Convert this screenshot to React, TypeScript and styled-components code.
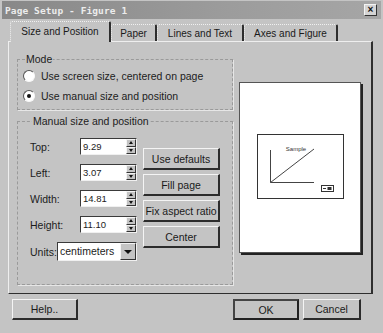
import React from "react";
import styled, { createGlobalStyle } from "styled-components";

const Global = createGlobalStyle`
  html, body { margin: 0; padding: 0; background: #c4c4c4; }
  body { font-family: "Liberation Sans", Arial, sans-serif; font-size: 10px; color: #1c1c1c; }
`;

const Window = styled.div`
  width: 383px;
  height: 333px;
  background: #c4c4c4;
  display: flex;
  flex-direction: column;
  box-sizing: border-box;
  overflow: hidden;
`;

const TitleBar = styled.div`
  height: 18px;
  margin: 1px 2px 0 2px;
  padding: 0 4px 0 3px;
  display: flex;
  align-items: center;
  justify-content: space-between;
  background: linear-gradient(90deg, #888 0%, #9c9c9c 60%, #a6a6a6 100%);
`;

const TitleText = styled.span`
  font-family: "DejaVu Sans Mono", "Liberation Mono", monospace;
  font-weight: bold;
  font-size: 9.5px;
  color: #ececec;
  letter-spacing: 0.1px;
`;

const CloseBox = styled.div`
  width: 11px;
  height: 10px;
  background: #d4d4d4;
  border: 1px solid;
  border-color: #f4f4f4 #333 #333 #f4f4f4;
  display: flex;
  align-items: center;
  justify-content: center;
  font-size: 10px;
  font-weight: bold;
  line-height: 1;
  color: #111;
`;

const Body = styled.div`
  flex: 1;
  display: flex;
  flex-direction: column;
  padding: 2px 10px 0 8px;
`;

const TabStrip = styled.div`
  height: 20px;
  display: flex;
  align-items: flex-end;
  padding-left: 2px;
  position: relative;
  z-index: 1;
`;

const Tab = styled.div<{ $active?: boolean; $w: number }>`
  width: ${(p) => p.$w}px;
  height: ${(p) => (p.$active ? 21 : 17)}px;
  margin-bottom: ${(p) => (p.$active ? -1 : 0)}px;
  box-sizing: border-box;
  background: #c4c4c4;
  border-top: 1px dotted #f0f0f0;
  border-left: 1px dotted #f0f0f0;
  border-right: 2px solid #2e2e2e;
  border-radius: 2px 2px 0 0;
  display: flex;
  align-items: center;
  justify-content: center;
  padding-bottom: ${(p) => (p.$active ? 2 : 0)}px;
  font-size: 10px;
  color: #1a1a1a;
`;

const Panel = styled.div`
  height: 253px;
  box-sizing: border-box;
  border: 1px solid;
  border-color: #eeeeee #2e2e2e #2e2e2e #eeeeee;
  border-right-width: 2px;
  display: flex;
  gap: 6px;
  padding: 11px 0 0 8px;
`;

const LeftCol = styled.div`
  width: 216px;
  display: flex;
  flex-direction: column;
  gap: 5px;
`;

const Group = styled.fieldset<{ $pad: string }>`
  margin: 0;
  padding: ${(p) => p.$pad};
  border: 1px dashed #9a9a9a;
  box-shadow: 1px 1px 0 #e6e6e6;
  min-width: 0;
`;

const Legend = styled.legend`
  padding: 0 1px;
  margin-left: 2px;
  font-size: 10.5px;
  line-height: 13px;
`;

const RadioRow = styled.label`
  height: 20px;
  display: flex;
  align-items: center;
  gap: 6px;
  font-size: 10.5px;
`;

const Radio = styled.span<{ $on?: boolean }>`
  width: 12px;
  height: 12px;
  box-sizing: border-box;
  border-radius: 50%;
  border: 1px solid;
  border-color: #555 #f8f8f8 #f8f8f8 #555;
  background: #fff;
  display: flex;
  align-items: center;
  justify-content: center;
  &::after {
    content: "";
    width: 4px;
    height: 4px;
    border-radius: 50%;
    background: ${(p) => (p.$on ? "#111" : "transparent")};
  }
`;

const ManualBody = styled.div`
  display: flex;
  gap: 6px;
`;

const FieldsCol = styled.div`
  display: flex;
  flex-direction: column;
  gap: 9px;
`;

const FieldRow = styled.div<{ $h?: number }>`
  height: ${(p) => p.$h ?? 17}px;
  display: flex;
  align-items: center;
`;

const FieldLabel = styled.span<{ $w: number }>`
  width: ${(p) => p.$w}px;
  font-size: 10.5px;
`;

const SpinBox = styled.div`
  width: 57px;
  height: 17px;
  box-sizing: border-box;
  border: 1px solid;
  border-color: #3a3a3a #f0f0f0 #f0f0f0 #3a3a3a;
  background: #fff;
  display: flex;
`;

const SpinValue = styled.span`
  flex: 1;
  padding-left: 2px;
  font-size: 9.5px;
  line-height: 15px;
`;

const SpinButtons = styled.div`
  width: 10px;
  display: flex;
  flex-direction: column;
  background: #c4c4c4;
`;

const SpinHalf = styled.div<{ $down?: boolean }>`
  flex: 1;
  box-sizing: border-box;
  border: 1px solid;
  border-color: #f4f4f4 #333 #333 #f4f4f4;
  display: flex;
  align-items: center;
  justify-content: center;
  &::after {
    content: "";
    border-left: 2.5px solid transparent;
    border-right: 2.5px solid transparent;
    ${(p) =>
      p.$down ? "border-top: 3px solid #111;" : "border-bottom: 3px solid #111;"}
  }
`;

const Select = styled.div`
  width: 80px;
  height: 19px;
  box-sizing: border-box;
  border: 1px solid;
  border-color: #3a3a3a #f0f0f0 #f0f0f0 #3a3a3a;
  background: #fff;
  display: flex;
`;

const SelectValue = styled.span`
  flex: 1;
  padding-left: 2px;
  font-size: 10.5px;
  line-height: 17px;
`;

const DropButton = styled.div`
  width: 16px;
  box-sizing: border-box;
  background: #c4c4c4;
  border: 1px solid;
  border-color: #f4f4f4 #333 #333 #f4f4f4;
  display: flex;
  align-items: center;
  justify-content: center;
  &::after {
    content: "";
    border-left: 4px solid transparent;
    border-right: 4px solid transparent;
    border-top: 4px solid #111;
  }
`;

const ButtonsCol = styled.div`
  margin-top: 10px;
  display: flex;
  flex-direction: column;
  gap: 4px;
`;

const Button = styled.button<{ $w: number; $h?: number; $default?: boolean }>`
  width: ${(p) => p.$w}px;
  height: ${(p) => p.$h ?? 22}px;
  margin: 0;
  padding: 0;
  box-sizing: border-box;
  background: #c4c4c4;
  border: ${(p) => (p.$default ? 2 : 1)}px solid;
  border-color: ${(p) =>
    p.$default ? "#444 #222 #222 #444" : "#f4f4f4 #2c2c2c #2c2c2c #f4f4f4"};
  border-right-width: 2px;
  border-bottom-width: 2px;
  font-family: "Liberation Sans", Arial, sans-serif;
  font-size: 10.5px;
  color: #1a1a1a;
`;

const Page = styled.div`
  margin-top: 29px;
  width: 122px;
  height: 171px;
  box-sizing: border-box;
  background: #fff;
  border: 1px solid #555;
  box-shadow: 2px 2px 0 #222;
  padding: 51px 0 0 17px;
`;

const Footer = styled.div`
  display: flex;
  align-items: flex-start;
  padding: 5px 12px 0 4px;
  gap: 4px;
`;

const Spacer = styled.div`
  flex: 1;
`;

const tabs = [
  { label: "Size and Position", w: 101, active: true },
  { label: "Paper", w: 46 },
  { label: "Lines and Text", w: 87 },
  { label: "Axes and Figure", w: 94 },
];

const fields = [
  { label: "Top:", value: "9.29" },
  { label: "Left:", value: "3.07" },
  { label: "Width:", value: "14.81" },
  { label: "Height:", value: "11.10" },
];

function SampleChart() {
  return (
    <svg width="88" height="66" viewBox="0 0 88 66">
      <rect x="0.5" y="0.5" width="86" height="64" fill="#fff" stroke="#333" />
      <line x1="13.5" y1="16" x2="13.5" y2="48.5" stroke="#444" />
      <line x1="13.5" y1="48.5" x2="57" y2="48.5" stroke="#444" />
      <line x1="13.5" y1="48.5" x2="57" y2="15" stroke="#444" />
      <text
        x="39"
        y="17"
        fontSize="6"
        textAnchor="middle"
        fontFamily="Liberation Sans, Arial, sans-serif"
        fill="#333"
      >
        Sample
      </text>
      <rect x="64.5" y="51.5" width="12" height="6" fill="#fff" stroke="#333" />
      <line x1="66" y1="54.5" x2="69" y2="54.5" stroke="#333" />
      <rect x="70.5" y="53" width="4" height="3" fill="#333" />
    </svg>
  );
}

export default function App() {
  return (
    <Window>
      <Global />
      <TitleBar>
        <TitleText>Page Setup - Figure 1</TitleText>
        <CloseBox>×</CloseBox>
      </TitleBar>
      <Body>
        <TabStrip>
          {tabs.map((t) => (
            <Tab key={t.label} $active={t.active} $w={t.w}>
              {t.label}
            </Tab>
          ))}
        </TabStrip>
        <Panel>
          <LeftCol>
            <Group $pad="0 0 3px 5px">
              <Legend>Mode</Legend>
              <RadioRow>
                <Radio />
                Use screen size, centered on page
              </RadioRow>
              <RadioRow>
                <Radio $on />
                Use manual size and position
              </RadioRow>
            </Group>
            <Group $pad="10px 0 23px 12px">
              <Legend>Manual size and position</Legend>
              <ManualBody>
                <FieldsCol>
                  {fields.map((f) => (
                    <FieldRow key={f.label}>
                      <FieldLabel $w={50}>{f.label}</FieldLabel>
                      <SpinBox>
                        <SpinValue>{f.value}</SpinValue>
                        <SpinButtons>
                          <SpinHalf />
                          <SpinHalf $down />
                        </SpinButtons>
                      </SpinBox>
                    </FieldRow>
                  ))}
                  <FieldRow $h={19}>
                    <FieldLabel $w={27}>Units:</FieldLabel>
                    <Select>
                      <SelectValue>centimeters</SelectValue>
                      <DropButton />
                    </Select>
                  </FieldRow>
                </FieldsCol>
                <ButtonsCol>
                  <Button $w={77}>Use defaults</Button>
                  <Button $w={77}>Fill page</Button>
                  <Button $w={77}>Fix aspect ratio</Button>
                  <Button $w={77}>Center</Button>
                </ButtonsCol>
              </ManualBody>
            </Group>
          </LeftCol>
          <Page>
            <SampleChart />
          </Page>
        </Panel>
        <Footer>
          <Button $w={66} $h={21}>
            Help..
          </Button>
          <Spacer />
          <Button $w={66} $h={21} $default>
            OK
          </Button>
          <Button $w={58} $h={21}>
            Cancel
          </Button>
        </Footer>
      </Body>
    </Window>
  );
}
